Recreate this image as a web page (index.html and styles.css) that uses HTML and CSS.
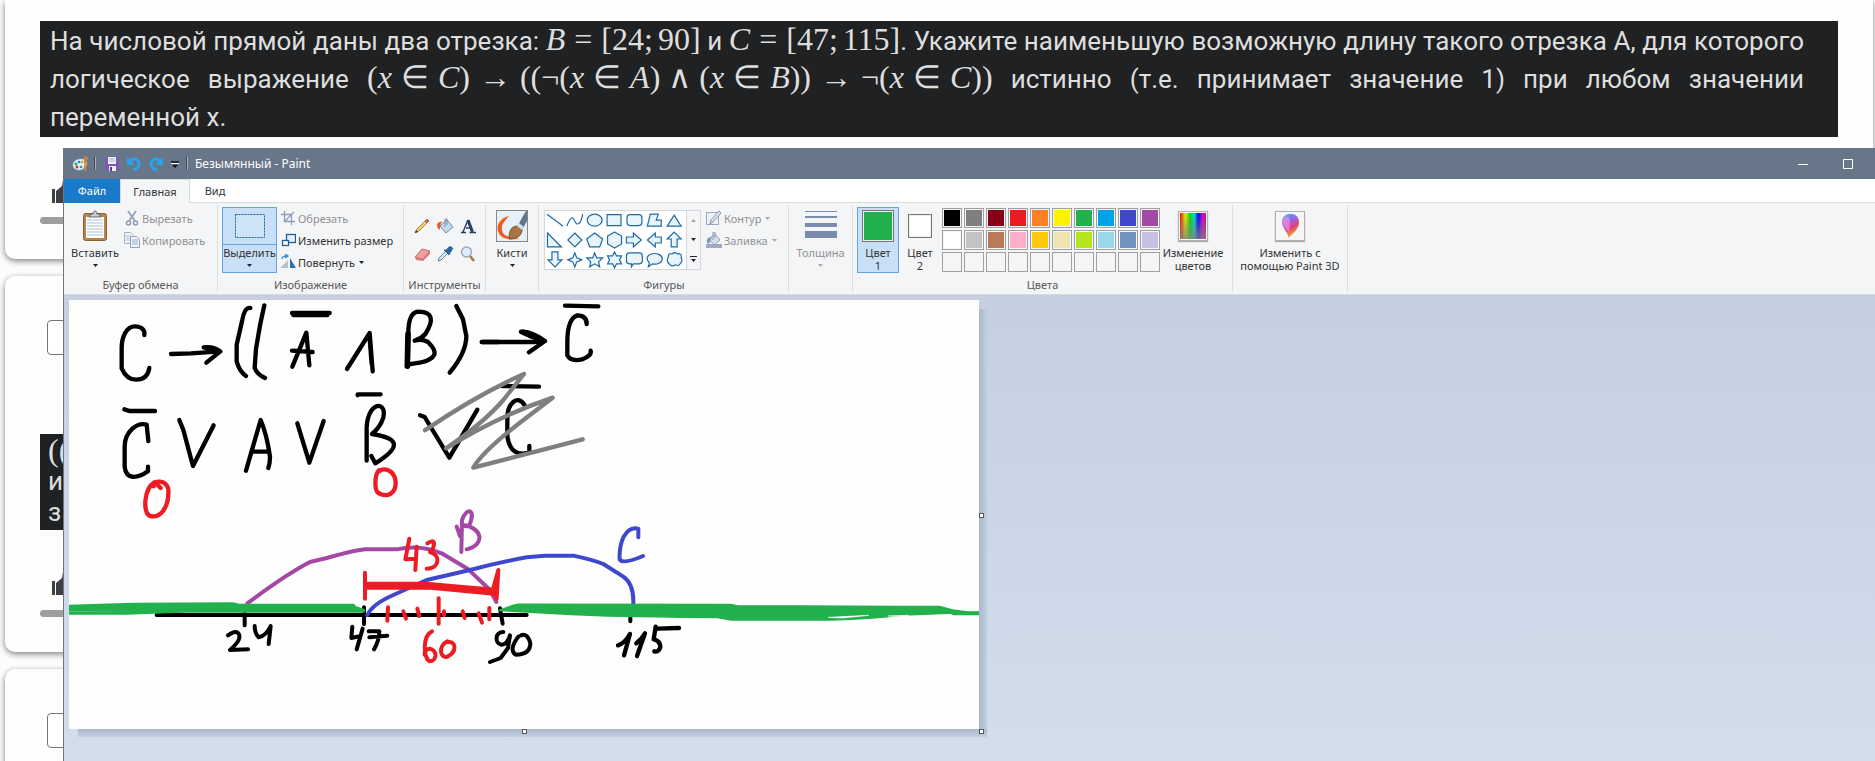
FILE: index.html
```html
<!DOCTYPE html>
<html lang="ru">
<head>
<meta charset="utf-8">
<title>Безымянный - Paint</title>
<link rel="stylesheet" href="styles.css">
</head>
<body>
<svg class="defs" aria-hidden="true">
  <symbol id="thumb" viewBox="0 0 24 24"><path d="M0 9h3v14H0zM4 23V11l6-5 1-6c3 0 4 2 4 4l-1 5h8c2 0 2 2 1 4l-3 8c0 1-1 2-3 2z" fill="#3d3f40"/></symbol>
  <symbol id="arrow" viewBox="0 0 5 3"><path d="M0 0h5L2.500 3z" fill="currentColor"/></symbol>
</svg>
<main class="page">
  <section class="card first">
    <p class="task">На числовой прямой даны два отрезка: <span class="math"><i>B</i><span class="rel">=</span>[24;<span class="thin"></span>90]</span> и <span class="math"><i>C</i><span class="rel">=</span>[47;<span class="thin"></span>115]</span>. Укажите наименьшую возможную длину такого отрезка А, для которого логическое выражение <span class="math">(<i>x</i><span class="rel">∈</span><i>C</i>)<span class="rel">→</span>((¬(<i>x</i><span class="rel">∈</span><i>A</i>)<span class="bin">∧</span>(<i>x</i><span class="rel">∈</span><i>B</i>))<span class="rel">→</span>¬(<i>x</i><span class="rel">∈</span><i>C</i>))</span> истинно (т.е. принимает значение 1) при любом значении переменной x.</p>
    <svg class="thumb"><use href="#thumb"/></svg>
    <div class="bar"></div>
  </section>
  <section class="card second">
    <input class="check" type="checkbox" aria-label="Выбрать">
    <div class="task short"><span class="math">((</span><span>и</span><span>з</span></div>
    <svg class="thumb"><use href="#thumb"/></svg>
    <div class="bar"></div>
  </section>
  <section class="card third">
    <input class="check" type="checkbox" aria-label="Выбрать">
  </section>
</main>

<div class="window">
  <header class="titlebar">
    <svg class="app" viewBox="0 0 16 16"><path d="M1 9c0-4 4-6 8-6 4 0 6 2 6 5 0 2-3 1-3 3s-1 3-5 3-6-2-6-5z" fill="#e4f0f7" stroke="#8fb3c8" stroke-width=".6"/><circle cx="4" cy="8" r="1.500" fill="#38a048"/><circle cx="7" cy="6" r="1.300" fill="#2f80d0"/><circle cx="10" cy="6" r="1.300" fill="#e8a020"/><circle cx="5" cy="11" r="1.500" fill="#d03030"/><circle cx="9" cy="11" r="1.300" fill="#1e9ad6"/><path d="M12 6h3l-1 9h-1z" fill="#ef8b2c"/><path d="M12 0l4 1-1 5h-3z" fill="#b88458"/></svg>
    <span class="tsep"></span>
    <button class="quick" aria-label="Сохранить"><svg viewBox="0 0 14 14"><path d="M0 0h14v14H2l-2-2z" fill="#8256b4"/><path d="M3 0h8v7H3z" fill="#eef0fa"/><path d="M4 2h6M4 4h6" stroke="#a7b2d2"/><path d="M4 9h7v5H4z" fill="#eee"/><path d="M5 10h2v4H5z" fill="#554077"/></svg></button>
    <button class="quick" aria-label="Отменить"><svg viewBox="0 0 14 14"><path d="M3 4c5-4 9-1 9 3 0 3-3 5-6 6" fill="none" stroke="#27a4ee" stroke-width="3"/><path d="M0 0v8h8z" fill="#27a4ee"/></svg></button>
    <button class="quick" aria-label="Вернуть"><svg viewBox="0 0 14 14"><path d="M11 4c-5-4-9-1-9 3 0 3 3 5 6 6" fill="none" stroke="#27a4ee" stroke-width="3"/><path d="M14 0v8H6z" fill="#27a4ee"/></svg></button>
    <button class="quick more" aria-label="Настройка панели"><svg viewBox="0 0 8 8"><path d="M0 1h8" stroke="#111" stroke-width="1.500"/><path d="M0 2.500h8" stroke="#fff"/><path d="M1 4h6L4 7z" fill="#111"/></svg></button>
    <span class="tsep"></span>
    <h1 class="title">Безымянный - Paint</h1>
    <button class="sys" aria-label="Свернуть"><svg viewBox="0 0 10 10"><path d="M0 5.500h10" stroke="#fff"/></svg></button>
    <button class="sys" aria-label="Развернуть"><svg viewBox="0 0 10 10"><path d="M.5.500h9v9h-9z" fill="none" stroke="#fff"/></svg></button>
  </header>
  <nav class="tabs">
    <button class="tab file">Файл</button>
    <button class="tab current">Главная</button>
    <button class="tab view">Вид</button>
  </nav>
  <div class="ribbon">
    <section class="group g-clip">
      <div class="tools">
        <button class="big paste"><svg class="pic" viewBox="0 0 32 32"><rect x="4.500" y="3.500" width="23" height="27" rx="2" fill="#b78348" stroke="#8a6437"/><path d="M7 7h18v21H7z" fill="#fff"/><path d="M8 10h16M8 13h16M8 16h16M8 19h16M8 22h16M8 25h16" stroke="#a9bfd4"/><path d="M10 7l2-3h2c0-4 4-4 4 0h2l2 3z" fill="#c9ccd0" stroke="#60656b"/></svg><span>Вставить</span><svg class="arr"><use href="#arrow"/></svg></button>
        <div class="stack">
          <button class="row off"><svg viewBox="0 0 16 16"><path d="M4 1l7 10M12 1L5 11" stroke="#94a3bd" stroke-width="1.800"/><circle cx="4.500" cy="13" r="2" fill="none" stroke="#8b9cba" stroke-width="1.500"/><circle cx="11.500" cy="13" r="2" fill="none" stroke="#8b9cba" stroke-width="1.500"/></svg>Вырезать</button>
          <button class="row off"><svg viewBox="0 0 16 16"><path d="M.5.500h6l3 3v8h-9z" fill="#edf2f8" stroke="#a5b4cb"/><path d="M2 4h5M2 6h5M2 8h4" stroke="#b7c5d8"/><path d="M6.500 4.500h6l3 3v8h-9z" fill="#edf2f8" stroke="#8fa2c0"/><path d="M8 8h6M8 10h6M8 12h6" stroke="#9db0ca"/></svg>Копировать</button>
        </div>
      </div>
      <h2>Буфер обмена</h2>
    </section>
    <section class="group g-image">
      <div class="tools">
        <button class="big select on" aria-pressed="true"><svg class="pic" viewBox="0 0 32 32"><rect x="1.500" y="4.500" width="29" height="23" fill="#cfe3f6" stroke="#1b63a0" stroke-dasharray="2 1"/></svg><span>Выделить</span><svg class="arr"><use href="#arrow"/></svg></button>
        <div class="stack">
          <button class="row off"><svg viewBox="0 0 16 16"><path d="M4.500 1v10.500H15M1 4.500h10.500V15M5 11L14 2" fill="none" stroke="#8d9dbb" stroke-width="1.300"/></svg>Обрезать</button>
          <button class="row"><svg viewBox="0 0 16 16"><rect x="6.500" y="2.500" width="9" height="8" fill="#e6f2fb" stroke="#1f5d96" stroke-width="1.300"/><rect x="2.500" y="8.500" width="6" height="5" fill="#fff" stroke="#1f5d96" stroke-width="1.300"/></svg>Изменить размер</button>
          <button class="row"><svg viewBox="0 0 16 16"><path d="M0 14h8V6z" fill="#b9bfc4"/><path d="M10 4v10h6z" fill="#2077b8"/><path d="M2 5c0-3 3-3 5-3M5 0l3 2-3 2" fill="none" stroke="#2f8bd6" stroke-width="1.300"/></svg>Повернуть<svg class="arr"><use href="#arrow"/></svg></button>
        </div>
      </div>
      <h2>Изображение</h2>
    </section>
    <section class="group g-tools">
      <div class="toolgrid">
        <button aria-label="Карандаш"><svg viewBox="0 0 16 16"><path d="M1 15l2-4 8-8 2 2-8 8z" fill="#f2cf60" stroke="#8c7330" stroke-width=".8"/><path d="M1 15l1-3 2 2z" fill="#333"/><path d="M11 3l2-2 2 2-2 2z" fill="#d9675f" stroke="#92453f" stroke-width=".6"/></svg></button>
        <button aria-label="Заливка"><svg viewBox="0 0 16 16"><path d="M3 8l7-6 6 7-7 6z" fill="#c5dced" stroke="#5585a8" stroke-width=".9"/><path d="M8 9V1h2v6" fill="none" stroke="#7890a2"/><path d="M0 7c0-3 4-4 6-3-3 1-3 4-3 8-2-1-3-3-3-5z" fill="#e8592c"/></svg></button>
        <button aria-label="Текст"><svg viewBox="0 0 16 16"><path d="M1 14.500h5M9.500 14.500H16M3 14L8 2M6 10h6" stroke="#263e61" stroke-width="1.400"/><path d="M8 2l4.500 12" stroke="#263e61" stroke-width="3"/></svg></button>
        <button aria-label="Ластик"><svg viewBox="0 0 16 16"><path d="M1 11l7-8 8 2-7 8z" fill="#efa09c" stroke="#b65c5a" stroke-width=".8"/><path d="M1 11l8 2v2l-7-1zM9 13l7-8v3l-7 7z" fill="#d77976"/></svg></button>
        <button aria-label="Палитра"><svg viewBox="0 0 16 16"><path d="M1 15l1-3 7-7 2 2-7 7z" fill="#dceaf4" stroke="#66829c"/><path d="M7 4l5 5 1-2 2-3c2-3-2-4-3-3L9 4z" fill="#286b9f" stroke="#174a75" stroke-width=".6"/></svg></button>
        <button aria-label="Масштаб"><svg viewBox="0 0 16 16"><path d="M10 10l4 5" stroke="#a97442" stroke-width="2.500"/><circle cx="6.500" cy="6" r="5" fill="#dceefb" stroke="#9daabc" stroke-width="1.500"/></svg></button>
      </div>
      <h2>Инструменты</h2>
    </section>
    <section class="group g-brush">
      <div class="tools">
        <button class="big brush"><svg class="pic" viewBox="0 0 32 32"><rect x=".5" y=".5" width="31" height="31" fill="#e6f0f6" stroke="#888"/><path d="M13 6C5 8 0 14 2 21c2 8 11 9 22 8-8-1-17-2-18-9-1-6 3-9 7-14z" fill="#f05a20"/><path d="M22 15L30 1h1v10l-5 9z" fill="#62768b"/><path d="M13 29c0-8 2-13 9-13l4 3c0 6-4 10-13 10z" fill="#a87646" stroke="#72502e"/><path d="M21 16l2-3 5 4-2 3z" fill="#d8e0e6"/></svg><span>Кисти</span><svg class="arr"><use href="#arrow"/></svg></button>
      </div>
    </section>
    <section class="group g-shapes">
      <div class="tools">
        <div class="gallery">
          <svg class="shapes" viewBox="0 0 142 58" role="img" aria-label="Фигуры" fill="#e9f4f9" stroke="#1d69a8" stroke-width="1.200">
            <path d="M2 3l16 12"/><path d="M22 15c4-10 6-10 8-5s6 4 8-7" fill="none"/><ellipse cx="50" cy="9" rx="7.500" ry="6"/><path d="M62.500 3.500h14v11h-14z"/><rect x="82.500" y="3.500" width="15" height="11" rx="3"/><path d="M106 3h8l-2 6h5v6h-14z"/><path d="M130 4l7 11h-14z"/>
            <path d="M2.500 22v14h14z"/><path d="M30 22l7 7-7 7-7-7z"/><path d="M50 22l8 6-3 8H45l-3-8z"/><path d="M70 21l7 4v8l-7 4-7-4v-8z"/><path d="M82 26h7v-4l8 7-8 7v-4h-7z"/><path d="M117 26h-6v-4l-8 7 8 7v-4h6z"/><path d="M130 21l7 7h-4v8h-6v-8h-4z"/>
            <path d="M10 56l-7-7h4v-8h6v8h4z"/><path d="M30 42l2 5 5 2-5 2-2 5-2-5-5-2 5-2z"/><path d="M50 42l2 5h6l-4 4 1 5-5-3-5 3 1-5-4-4h6z"/><path d="M70 41l2 4h5l-2 4 2 4h-5l-2 4-2-4h-5l2-4-2-4h5z"/><path d="M85 42h10q3 0 3 3v5q0 3-3 3h-6l-2 3v-3h-2q-3 0-3-3v-5q0-3 3-3z"/><path d="M104 56l1-4c-9-10 13-13 13-4 0 4-5 6-10 5z"/><path d="M125 53c-4-3-1-5-1-7 0-3 2-4 4-3 2-2 4-1 5 0 3-1 5 1 4 4 2 3 0 5-1 6-1 2-3 2-5 1-2 2-5 1-6-1z"/>
          </svg>
          <div class="scroll"><button class="off" aria-label="Вверх"><svg class="arr up"><use href="#arrow"/></svg></button><button aria-label="Вниз"><svg class="arr"><use href="#arrow"/></svg></button><button aria-label="Ещё"><svg viewBox="0 0 7 6"><path d="M0 .5h7" stroke="#223"/><path d="M1 3h5L3.500 6z" fill="#223"/></svg></button></div>
        </div>
        <div class="stack">
          <button class="row off"><svg viewBox="0 0 16 16"><path d="M.5 2.500h12v12H.5z" fill="#edf1f6" stroke="#9aa9bf"/><path d="M4 14l1-4 8-9 2 2-8 9z" fill="#dce3ec" stroke="#8798b3"/></svg>Контур<svg class="arr"><use href="#arrow"/></svg></button>
          <button class="row off"><svg viewBox="0 0 16 16"><path d="M0 12h16v4H0z" fill="#9caac2"/><path d="M3 7l6-5 5 6-6 5z" fill="#d7dfe9" stroke="#8b9cb5"/><path d="M7 8V0h2v6" fill="none" stroke="#8b9cb5"/><path d="M1 11c-1-4 1-6 5-6l-3 7z" fill="#8799b5"/></svg>Заливка<svg class="arr"><use href="#arrow"/></svg></button>
        </div>
      </div>
      <h2>Фигуры</h2>
    </section>
    <section class="group g-size">
      <div class="tools"><button class="big size off"><svg class="pic" viewBox="0 0 32 32"><path d="M0 1h32v1H0zM0 6h32v2H0zM0 13h32v4H0zM0 21h32v7H0z" fill="#798cae"/></svg><span>Толщина</span><svg class="arr"><use href="#arrow"/></svg></button></div>
    </section>
    <section class="group g-colors">
      <div class="tools">
        <button class="big col on" aria-pressed="true"><b class="sw one"></b><span>Цвет<br>1</span></button>
        <button class="big col"><b class="sw two"></b><span>Цвет<br>2</span></button>
        <div class="palette">
          <button class="c1" aria-label="Чёрный"></button><button class="c2" aria-label="Серый"></button><button class="c3" aria-label="Тёмно-красный"></button><button class="c4" aria-label="Красный"></button><button class="c5" aria-label="Оранжевый"></button><button class="c6" aria-label="Жёлтый"></button><button class="c7" aria-label="Зелёный"></button><button class="c8" aria-label="Бирюзовый"></button><button class="c9" aria-label="Индиго"></button><button class="c10" aria-label="Лиловый"></button>
          <button class="c11" aria-label="Белый"></button><button class="c12" aria-label="Светло-серый"></button><button class="c13" aria-label="Коричневый"></button><button class="c14" aria-label="Розовый"></button><button class="c15" aria-label="Золотой"></button><button class="c16" aria-label="Светло-жёлтый"></button><button class="c17" aria-label="Травяной"></button><button class="c18" aria-label="Голубой"></button><button class="c19" aria-label="Сизый"></button><button class="c20" aria-label="Сиреневый"></button>
          <button aria-label="Пусто"></button><button aria-label="Пусто"></button><button aria-label="Пусто"></button><button aria-label="Пусто"></button><button aria-label="Пусто"></button><button aria-label="Пусто"></button><button aria-label="Пусто"></button><button aria-label="Пусто"></button><button aria-label="Пусто"></button><button aria-label="Пусто"></button>
        </div>
        <button class="big edit"><b class="frame"><b class="rainbow"></b></b><span>Изменение<br>цветов</span></button>
      </div>
      <h2>Цвета</h2>
    </section>
    <section class="group g-3d">
      <div class="tools"><button class="big three"><b class="frame"><svg viewBox="0 0 24 26"><defs><linearGradient id="drop" x1="0" y1="0" x2=".4" y2="1"><stop offset="0" stop-color="#29cfe8"/><stop offset=".4" stop-color="#9a62ee"/><stop offset=".7" stop-color="#e2436f"/><stop offset="1" stop-color="#f7b52d"/></linearGradient></defs><path d="M10 25c1-6-6-9-6-16 0-11 17-11 17 0 0 7-6 12-11 16z" fill="url(#drop)"/><path d="M4 9c0-6 8-8 8-1s-1 9-1 12c-2-4-7-6-7-11z" fill="#ef8be0" opacity=".7"/></svg></b><span>Изменить с<br>помощью Paint 3D</span></button></div>
    </section>
  </div>
  <div class="workspace">
    <div class="sheet">
      <svg class="drawing" viewBox="0 0 910 429" role="img" aria-label="Рукописное решение на числовой прямой" fill="none" stroke-linecap="round" stroke-linejoin="round">
        <g transform="translate(-69 -10) scale(.33333)" stroke="#000" stroke-width="13">
          <path d="M433 135v-10q-6-16-28-16c-27 0-40 34-40 66v60q15 34 43 34 35 0 40-35"/>
          <path d="M513 192l60-2 88-6-50-12q30-4 50 12l-42 34"/>
          <path d="M751 54q-17-3-24 35l-17 75v50q8 30 28 44M793 46l-12 55-13 75-4 58q8 20 31 30"/>
          <path d="M876 69h113M880 75h102"/><path d="M877 230l42-102 9 98M876 182l62 4"/>
          <path d="M1041 237l68-108 9 115M1108 132l7 90"/>
          <path d="M1223 230l2-100q0-65 32-65 60 2 19 67-12 14-32 20 22-6 40 4c30 30 24 44-4 56-15 6-35 7-55 12z"/><path d="M1224 132l-2 96" stroke-width="17"/>
          <path d="M1369 48l20 40 10 50q0 50-50 110M1445 156h50"/>
          <path d="M373 358l15 5h77M445 453l-5-49c-30-8-66 22-66 66v60c4 40 38 36 70 14v-14"/>
          <path d="M538 390l12 30 29 108 62-122"/>
          <path d="M738 542l44-152q18 42 28 110 0 20-5 34M757 485h50"/>
          <path d="M892 400l36 118 43-125"/>
          <path d="M1073 316v-3h69M1100 512v-84c-4-94 62-100 50-46q-8 28-34 50c92 14 80 44 10 88l-12-22"/>
          <path d="M1260 376l14 5 74 122 84-144"/>
          <g stroke="#ed1c24"><path d="M463 577c-32 20-34 90-15 100 30 10 60-20 57-80-8-28-44-28-44-8M470 582l12 12"/><path d="M1137 541c-14 14-14 60-2 68 28 16 54 0 52-34-4-36-36-42-48-32"/></g>
        </g>
        <g transform="translate(331 -10) scale(.33333)" stroke="#000" stroke-width="13">
          <path d="M248 156h152l35-3-40-13-32-15q30-2 72 28l-48 34M495 47l100 2M560 102q0-26-28-26-30 10-30 80v40q10 20 44 12 30-10 26-26"/><path d="M370 127l50 20" stroke-width="16"/>
          <path d="M305 288l112 2M374 346c-20-34-52-8-52 40v54c8 48 32 56 66 48v-20"/>
          <path d="M75 421Q230 315 372 252L310 330Q250 400 138 475 290 380 458 323L390 375Q250 480 220 533L360 497 548 448" stroke="#7f7f7f"/>
        </g>
        <g transform="translate(-9 190) scale(.33333)" stroke="#000" stroke-width="12">
          <path d="M290 375h1110M554 370v36M912 352v50M1320 355l8 46M1711 375v19"/>
          <path d="M504 436q28-20 34 0 4 16-28 44l54-2M584 408q0 22 12 34 22-4 36-34l-6 54"/>
          <path d="M877 410l-3 34 28-6M908 416l-18 62M926 424h32q0 28-16 54M928 442l54-5"/>
          <path d="M1330 426c-26 0-26 34-6 38q18 0 26-28l-6 38-22 30-32 12M1375 440q-30 40-8 54 44 0 44-34-8-32-28-24"/>
          <path d="M562 340Q680 252 750 216L800 204Q880 182 915 178H1010Q1080 162 1145 190L1225 238 1290 300 1309 336M1204 186l2-96c16-42 42-32 22 16q-14 6-14 0c54 10 62 58 6 72M1190 110l10 28" stroke="#a349a4"/>
          <path d="M922 375Q938 342 1000 315L1100 270 1230 240Q1320 216 1400 202L1455 197H1540Q1600 210 1630 222L1690 260Q1722 282 1720 340M1735 142v-26q-26-6-44 24-14 30-12 68 10 16 70-10" stroke="#3f48cc"/>
          <path d="M27 350l190-6 300-1 20 4H880v5l30 10H380L27 357z" fill="#22b14c" stroke="#22b14c" stroke-width="12"/>
          <path d="M20 369h180l165-6" stroke="#22b14c" stroke-width="10"/>
          <path d="M1318 361q24-10 55-18l640 1 20 4h200l270 2h135l40 10 55 8h50-80l-170 7q-100 12-220 15h-300l-40-8q-120 0-330-4l-110-5z" fill="#22b14c" stroke="#22b14c" stroke-width="5"/>
          <path d="M2306 382l120-6-78 8zM2486 378l60-2-30 3z" fill="#fff" stroke="#fff" stroke-width="2"/>
          <path d="M2680 370h90" stroke="#22b14c"/>
          <path d="M1674 466q20-6 36-34l-18 64M1729 460q16-12 26-30l-24 68M1787 410l-6 38q20 4 20 24-6 16-18 12M1791 416l66-2" stroke-width="13"/>
          <g stroke="#ed1c24"><path d="M915 248v78"/><path d="M918 282h180l204 18v10l-190-18H920" stroke-width="14"/><path d="M1315 240l-5 86-10-32z"/><path d="M1048 146l-12 62 28-2M1070 170l-4 70M1102 160q20-14 20 2-2 18-12 24c34 10 28 50-10 50"/><path d="M984 352l-2 40M1030 364l8 22M1072 356l6 22M1136 325v76M1152 364v12M1208 364l6 20M1256 370l10 28M1288 354v34"/><path d="M1116 424c-30 14-26 84-6 90 20-2 24-30 0-38-10 0-16 8-16 18M1162 454c-30 14-20 54 0 46 30-14 26-46 4-44"/></g>
        </g>
      </svg>
      <i class="handle right"></i><i class="handle bottom"></i><i class="handle corner"></i>
    </div>
  </div>
</div>
</body>
</html>
```
FILE: styles.css
```css
* { box-sizing: border-box; }
body { margin: 0; font-family: "Noto Sans", sans-serif; background: #fdfdfd; }
button { margin: 0; padding: 0; border: 0; background: none; color: inherit; font: inherit; }
h1, h2, p { margin: 0; font-weight: 400; }
.defs { position: absolute; width: 0; height: 0; }

/* Page behind the window */
.page { height: 100vh; overflow: hidden; padding: 0 2px 0 5px; display: flex; flex-direction: column; gap: 17px; }
.card { flex: none; background: #fefefe; border-radius: 10px; box-shadow: 0 2px 6px rgba(0, 0, 0, .5); padding: 0 35px; display: flex; flex-direction: column; align-items: flex-start; }
.first { padding-top: 21px; padding-bottom: 35px; border-radius: 0 0 10px 10px; }
.second { padding-top: 44px; padding-bottom: 35px; }
.third { padding-top: 44px; padding-bottom: 80px; }
.task { width: 100%; padding: 1px 34px 1px 10px; background: #1f2123; color: #dedede; font: 26px/38px Roboto, sans-serif; text-align: justify; }
.math { display: inline-block; font: 32px/34px "Liberation Serif", serif; white-space: nowrap; }
.rel { margin: 0 9px; }
.bin { margin: 0 8px; }
.thin { display: inline-block; width: 5px; }
.short { display: flex; flex-direction: column; margin-top: 79px; padding: 0 8px; line-height: 31px; height: 96px; }
.short .math { line-height: 32px; }
.thumb { width: 24px; height: 24px; margin: 42px 0 0 12px; }
.first .thumb { margin-top: 43px; }
.bar { width: 100%; height: 7px; margin-top: 14px; border-radius: 4px; background: #9e9e9e; }
.first .bar { margin-top: 13px; }
.check { appearance: none; width: 34px; height: 35px; margin: 0 0 0 7px; border: 1px solid #777; border-radius: 4px; background: #fff; }

/* Application window */
.window { position: absolute; left: 63px; top: 148px; right: 0; bottom: 0; display: flex; flex-direction: column; border-left: 1px solid #68768a; font-size: 11px; line-height: 13px; color: #333; overflow: hidden; }
.titlebar { display: flex; align-items: center; height: 31px; padding: 0 22px 0 8px; background: #68768a; color: #fff; flex: none; }
.app { width: 16px; height: 16px; }
.tsep { width: 2px; height: 13px; margin: 0 9px 0 6px; border-left: 1px solid #444c58; border-right: 1px solid #a4afbd; }
.quick { width: 14px; height: 14px; margin-right: 8px; }
.quick svg { display: block; width: 100%; height: 100%; }
.more { width: 8px; height: 8px; margin: 2px 0 0 0; }
.more + .tsep { margin: 0 7px 0 7px; }
.title { flex: 1; font-size: 12px; }
.sys { width: 10px; height: 10px; margin-left: 35px; }
.sys svg { display: block; width: 10px; height: 10px; }
.tabs { display: flex; height: 24px; flex: none; background: #fff; border-bottom: 1px solid #d9dbdd; }
.tab { height: 24px; padding-bottom: 1px; }
.file { width: 56px; background: #1979ca; color: #fff; }
.current { width: 70px; background: #f4f6f8; border: 1px solid #d9dbdd; border-bottom: 0; }
.view { width: 50px; }
.ribbon { display: flex; flex: none; height: 92px; background: #f4f5f7; border-bottom: 1px solid #d8dadc; }
.group { flex: none; display: flex; flex-direction: column; justify-content: space-between; margin: 2px 0 2px; padding: 2px 4px 0; border-right: 1px solid #dcdee0; }
.group h2 { font-size: 11px; line-height: 14px; text-align: center; color: #5a5a5a; }
.g-clip { width: 154px; }
.g-image { width: 186px; }
.g-tools { width: 82px; padding-left: 2px; padding-right: 2px; }
.g-brush { width: 53px; }
.g-shapes { width: 250px; padding-left: 5px; }
.g-size { width: 64px; }
.g-colors { width: 380px; }
.g-3d { width: 115px; }
.tools { display: flex; }
.big { display: flex; flex-direction: column; align-items: center; height: 66px; padding-top: 3px; white-space: nowrap; }
.pic { width: 32px; height: 32px; margin-bottom: 4px; }
.big span { line-height: 13px; }
.arr { width: 5px; height: 3px; color: #222; }
.big .arr { margin-top: 5px; }
.off { color: #929292; }
.off .arr { color: #aaa; }
.on { border: 1px solid #64a5e7; background: #c9dff5; padding-top: 2px; }
.paste { width: 54px; margin-right: 2px; }
.select { width: 55px; margin-right: 3px; background: linear-gradient(#c9dff5 36px, #64a5e7 36px, #64a5e7 37px, #c9dff5 37px); }
.brush { width: 44px; }
.size { width: 55px; }
.stack { display: flex; flex-direction: column; }
.row { display: flex; align-items: center; height: 22px; white-space: nowrap; }
.row svg { width: 16px; height: 16px; margin-right: 2px; }
.row .arr { width: 5px; height: 3px; margin: 0 0 0 4px; }
.toolgrid { display: grid; grid-template-columns: repeat(3, 23px); grid-template-rows: 28px 28px; justify-content: center; place-items: center; padding-top: 5px; }
.toolgrid svg { display: block; width: 16px; height: 16px; }
.gallery { display: flex; width: 157px; height: 60px; margin: 3px 5px 0 0; background: #fff; border: 1px solid #d5d7da; }
.shapes { width: 142px; height: 58px; }
.scroll { display: flex; flex-direction: column; width: 14px; background: #f4f5f7; border-left: 1px solid #d5d7da; }
.scroll button { display: flex; flex: 1; align-items: center; justify-content: center; }
.scroll svg:not(.arr) { width: 7px; height: 6px; }
.up { transform: rotate(180deg); }
.col { width: 42px; }
.sw { width: 32px; height: 32px; margin-bottom: 4px; border: 1px solid #777; box-shadow: inset 0 0 0 1px #eee; }
.one { background: #22b14c; }
.two { width: 24px; height: 24px; margin: 4px 0 8px; background: #fff; }
.palette { display: grid; grid-template-columns: repeat(10, 20px); grid-auto-rows: 20px; gap: 2px; margin: 1px 2px 0 1px; align-content: start; }
.palette button { border: 1px solid #a0a0a0; padding: 1px; background-clip: content-box; }
.c1 { background-color: #000; } .c2 { background-color: #7f7f7f; } .c3 { background-color: #880015; } .c4 { background-color: #ed1c24; } .c5 { background-color: #ff7f27; }
.c6 { background-color: #fff200; } .c7 { background-color: #22b14c; } .c8 { background-color: #00a2e8; } .c9 { background-color: #3f48cc; } .c10 { background-color: #a349a4; }
.c11 { background-color: #fff; } .c12 { background-color: #c3c3c3; } .c13 { background-color: #b97a57; } .c14 { background-color: #ffaec9; } .c15 { background-color: #ffc90e; }
.c16 { background-color: #efe4b0; } .c17 { background-color: #b5e61d; } .c18 { background-color: #99d9ea; } .c19 { background-color: #7092be; } .c20 { background-color: #c8bfe7; }
.edit { width: 62px; }
.three { width: 106px; }
.frame { width: 30px; height: 30px; margin: 1px 0 5px; padding: 1px; background: #f6f6f6; border: 1px solid #b0b0b0; box-shadow: 0 1px 1px #aaa; }
.frame svg { display: block; width: 26px; height: 26px; }
.rainbow { display: block; height: 100%; background: linear-gradient(transparent, rgba(128, 128, 128, .8)), linear-gradient(90deg, #e00, #ee0 20%, #0d0 40%, #0dd 55%, #00e 70%, #d0d 88%, #d04); }
.workspace { flex: 1; padding: 5px; background: linear-gradient(#c5cfe0, #d3ddec); }
.sheet { position: relative; width: 910px; background: #fefefe; }
.drawing { display: block; width: 100%; }
.sheet::before, .sheet::after { content: ""; position: absolute; }
.sheet::before { left: 9px; right: -8px; top: 100%; height: 8px; background: linear-gradient(#a9b7ca, #c4d0e1); }
.sheet::after { left: 100%; top: 9px; bottom: 0; width: 8px; background: linear-gradient(90deg, #a9b7ca, #c4d0e1); }
.handle { position: absolute; z-index: 1; width: 5px; height: 5px; background: #fff; border: 1px solid #555; }
.right { left: 100%; top: 213px; }
.bottom { left: 453px; top: 100%; }
.corner { left: 100%; top: 100%; }
```
